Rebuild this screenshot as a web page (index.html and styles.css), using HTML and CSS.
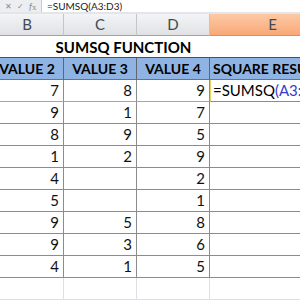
FILE: index.html
```html
<!DOCTYPE html>
<html lang="en">
<head>
  <meta charset="UTF-8" />
  <title>SUMSQ Function</title>
  <link rel="stylesheet" href="styles.css">
</head>
<body>
  <div class="sheet">
    <div class="fbar">
      <div class="fbtns">
        <span class="btn">✕</span>
        <span class="btn">✓</span>
        <span class="btn fx"><i>f</i>x</span>
      </div>
      <div class="finput">=SUMSQ(A3:D3)</div>
    </div>

    <div class="row cols">
      <div class="c">B</div>
      <div class="c">C</div>
      <div class="c">D</div>
      <div class="c sel">E</div>
    </div>

    <div class="row title">
      <div class="merged">SUMSQ FUNCTION</div>
    </div>

    <div class="row head">
      <div class="c">VALUE 2</div>
      <div class="c">VALUE 3</div>
      <div class="c">VALUE 4</div>
      <div class="c wide">SQUARE RESULT</div>
    </div>

    <div class="row data range">
      <div class="c">7</div>
      <div class="c">8</div>
      <div class="c">9</div>
      <div class="c edit">=SUMSQ<span class="ref">(A3:</span></div>
    </div>
    <div class="row data">
      <div class="c">9</div><div class="c">1</div><div class="c">7</div><div class="c"></div>
    </div>
    <div class="row data">
      <div class="c">8</div><div class="c">9</div><div class="c">5</div><div class="c"></div>
    </div>
    <div class="row data">
      <div class="c">1</div><div class="c">2</div><div class="c">9</div><div class="c"></div>
    </div>
    <div class="row data">
      <div class="c">4</div><div class="c"></div><div class="c">2</div><div class="c"></div>
    </div>
    <div class="row data">
      <div class="c">5</div><div class="c"></div><div class="c">1</div><div class="c"></div>
    </div>
    <div class="row data">
      <div class="c">9</div><div class="c">5</div><div class="c">8</div><div class="c"></div>
    </div>
    <div class="row data">
      <div class="c">9</div><div class="c">3</div><div class="c">6</div><div class="c"></div>
    </div>
    <div class="row data">
      <div class="c">4</div><div class="c">1</div><div class="c">5</div><div class="c"></div>
    </div>

    <div class="row empty">
      <div class="c"></div><div class="c"></div><div class="c"></div><div class="c"></div>
    </div>
  </div>
</body>
</html>
```

FILE: styles.css
```css
* {
  margin: 0;
  padding: 0;
  box-sizing: border-box;
  font-family: Lato, 'Liberation Sans', sans-serif;
}

body {
  background-color: white;
  width: 300px;
  height: 300px;
  overflow: hidden;
}

.sheet {
  width: 300px;
  overflow: hidden;
}

/* formula bar */
.fbar {
  display: flex;
  height: 14px;
  background-color: #eceef1;
  border-bottom: 2px solid #e3e5e8;
}

.fbtns {
  width: 41px;
  display: flex;
  align-items: center;
  justify-content: space-around;
  padding: 0 2px;
  color: #8a8a8a;
  font-size: 8px;
}

.fx {
  font-family: 'Liberation Serif', serif;
  font-size: 9px;
}

.finput {
  flex: 1;
  background-color: white;
  border-left: 1px solid #c6c9cd;
  padding-left: 5px;
  font-size: 10px;
  line-height: 12px;
  color: #222;
}

/* grid rows */
.row {
  display: grid;
  grid-template-columns: 73px 73px 73px 126px;
  height: 22px;
  margin-left: -9px;
}

.c {
  border-right: 1px solid #8c8c8c;
  border-bottom: 1px solid #8c8c8c;
  font-size: 15px;
  line-height: 21px;
  color: #111;
  white-space: nowrap;
  overflow: hidden;
}

.cols {
  height: 22px;
  background: linear-gradient(#f3f4f5, #dfe1e4);
}

.cols .c {
  text-align: center;
  border-right-color: #c2c5c9;
  border-bottom-color: #9fa3a8;
  color: #3f4a56;
  font-size: 15px;
}

.cols .sel {
  background: linear-gradient(#fcc9a6, #f9a877);
  border-bottom-color: #e98a52;
}

.title {
  display: block;
  height: 22px;
  border-bottom: 1px solid #4a4f5c;
}

.merged {
  width: 345px;
  padding-right: 80px;
  text-align: center;
  font-weight: bold;
  font-size: 15px;
  line-height: 22px;
  color: #000;
}

.head {
  background-color: #8fb4e3;
}

.head .c {
  text-align: center;
  font-weight: bold;
  font-size: 14px;
  color: #000;
  border-right-color: #5f6670;
  border-bottom-color: #6b7380;
}

.head .wide {
  text-align: left;
  padding-left: 3px;
}

.data .c {
  text-align: right;
  padding-right: 4px;
}

.range .c {
  border-bottom-color: #9b9bef;
}

.range .edit {
  text-align: left;
  padding-left: 2px;
  border-left: 1px solid #e5d36a;
  border-bottom-color: #8c8c8c;
  font-size: 15px;
  color: #000;
}

.ref {
  color: #3a3ad0;
}

.empty .c {
  border-right-color: #dcdfe6;
  border-bottom-color: #dcdfe6;
}
```
